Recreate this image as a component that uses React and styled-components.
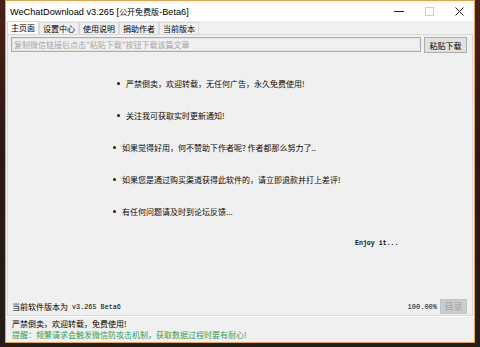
import React from "react";
import styled, { createGlobalStyle } from "styled-components";

const Global = createGlobalStyle`
  html, body { margin: 0; padding: 0; background: #1e1a18; }
  * { box-sizing: border-box; }
`;

const CJK = `"Noto Sans CJK SC", "Noto Sans", sans-serif`;
const MONO = `"Liberation Mono", "Noto Sans CJK SC", monospace`;

const Desktop = styled.div`
  width: 480px;
  height: 347px;
  padding: 0 5px 4px 5px;
  display: flex;
  background:
    linear-gradient(180deg, #4a1f18 0%, #2b1814 45%, #241c18 100%);
`;

const Window = styled.div`
  flex: 1;
  display: flex;
  flex-direction: column;
  border: 1px solid #eaa24a;
  background: #f0f0f0;
  overflow: hidden;
`;

const TitleBar = styled.div`
  height: 20px;
  flex: none;
  display: flex;
  align-items: center;
  background: #ffffff;
  padding-left: 4px;
`;

const Title = styled.div`
  flex: 1;
  font-family: "Liberation Sans", "Noto Sans CJK SC", sans-serif;
  font-size: 9.2px;
  color: #000;
  white-space: nowrap;
`;

const TitleCjk = styled.span`
  font-family: ${CJK};
  font-size: 8px;
`;

const Ctrl = styled.div`
  width: 30px;
  height: 20px;
  display: flex;
  align-items: center;
  justify-content: center;
`;

const TabStrip = styled.div`
  height: 13px;
  flex: none;
  display: flex;
  align-items: flex-end;
  padding-left: 1px;
`;

const Tab = styled.div`
  height: ${(p) => (p.$active ? "13px" : "12px")};
  padding: 0 3px;
  border: 1px solid #d9d9d9;
  border-bottom: none;
  background: ${(p) => (p.$active ? "#fbfbfb" : "#f0f0f0")};
  font-family: ${CJK};
  font-size: 8px;
  line-height: 11px;
  color: #000;
  white-space: nowrap;
`;

const Page = styled.div`
  flex: 1;
  margin: 0 1px;
  border: 1px solid #d9d9d9;
  display: flex;
  flex-direction: column;
  padding: 2px 5px 1px 3px;
`;

const InputRow = styled.div`
  display: flex;
  align-items: flex-start;
  gap: 3px;
  height: 16px;
`;

const UrlBox = styled.div`
  width: 410px;
  height: 15px;
  border: 1px solid #adadad;
  box-shadow: inset 0 0 0 1px #e3e3e3;
  background: #f0f0f0;
  font-family: ${CJK};
  font-size: 8px;
  line-height: 13px;
  padding-left: 2px;
  color: #a6a6a6;
  white-space: nowrap;
`;

const Button = styled.div`
  height: ${(p) => (p.$h ? p.$h : 16)}px;
  width: ${(p) => p.$w}px;
  border: 1px solid ${(p) => (p.$disabled ? "#c4c4c4" : "#adadad")};
  background: ${(p) => (p.$disabled ? "#cccccc" : "#e1e1e1")};
  color: ${(p) => (p.$disabled ? "#a3a3a3" : "#000")};
  font-family: ${CJK};
  font-size: ${(p) => (p.$disabled ? 9 : 8)}px;
  display: flex;
  align-items: center;
  justify-content: center;
  white-space: nowrap;
`;

const List = styled.div`
  margin-top: 14px;
  display: flex;
  flex-direction: column;
`;

const Item = styled.div`
  height: 32px;
  display: flex;
  align-items: center;
  padding-left: ${(p) => p.$indent}px;
  font-family: ${CJK};
  font-size: 8px;
  color: #0a0a0a;
  white-space: nowrap;
`;

const Dot = styled.span`
  width: 3px;
  height: 3px;
  border-radius: 50%;
  background: #2a2116;
  margin-right: 6px;
  flex: none;
`;

const Enjoy = styled.div`
  height: 32px;
  display: flex;
  align-items: center;
  padding-left: 344px;
  font-family: "Liberation Mono", monospace;
  font-size: 6.6px;
  font-weight: bold;
  color: #111;
`;

const StatusRow = styled.div`
  margin-top: auto;
  display: flex;
  align-items: center;
  height: 15px;
  padding-left: 1px;
  font-family: ${CJK};
  font-size: 8px;
  color: #000;
`;

const Mono = styled.span`
  font-family: ${MONO};
  font-size: 6.8px;
  margin-left: 4px;
`;

const Percent = styled.span`
  margin-left: auto;
  margin-right: 3px;
  font-family: ${MONO};
  font-size: 7px;
  color: #000;
`;

const Footer = styled.div`
  flex: none;
  height: 26px;
  border-top: 1px solid #ffffff;
  padding: 1px 6px 0 6px;
  font-family: ${CJK};
  font-size: 8px;
`;

const Line = styled.div`
  line-height: 11px;
  color: ${(p) => p.$color || "#000"};
  white-space: nowrap;
`;

export default function App() {
  return (
    <>
      <Global />
      <Desktop>
        <Window>
          <TitleBar>
            <Title>
              WeChatDownload v3.265 [<TitleCjk>公开免费版</TitleCjk>-Beta6]
            </Title>
            <Ctrl>
              <svg width="10" height="10" viewBox="0 0 10 10">
                <line x1="0" y1="5.5" x2="10" y2="5.5" stroke="#222" strokeWidth="1" />
              </svg>
            </Ctrl>
            <Ctrl>
              <svg width="9" height="9" viewBox="0 0 9 9">
                <rect x="0.5" y="0.5" width="8" height="8" fill="none" stroke="#cfcfcf" strokeWidth="1" />
              </svg>
            </Ctrl>
            <Ctrl>
              <svg width="9" height="9" viewBox="0 0 9 9">
                <path d="M0.5 0.5 L8.5 8.5 M8.5 0.5 L0.5 8.5" stroke="#222" strokeWidth="1" />
              </svg>
            </Ctrl>
          </TitleBar>
          <TabStrip>
            <Tab $active>主页面</Tab>
            <Tab>设置中心</Tab>
            <Tab>使用说明</Tab>
            <Tab>捐助作者</Tab>
            <Tab>当前版本</Tab>
          </TabStrip>
          <Page>
            <InputRow>
              <UrlBox>复制微信链接后点击"粘贴下载"按钮下载该篇文章</UrlBox>
              <Button $w={43}>粘贴下载</Button>
            </InputRow>
            <List>
              <Item $indent={106}>
                <Dot />严禁倒卖，欢迎转载，无任何广告，永久免费使用!
              </Item>
              <Item $indent={106}>
                <Dot />关注我可获取实时更新通知!
              </Item>
              <Item $indent={102}>
                <Dot />如果觉得好用，何不赞助下作者呢? 作者都那么努力了..
              </Item>
              <Item $indent={102}>
                <Dot />如果您是通过购买渠道获得此软件的，请立即退款并打上差评!
              </Item>
              <Item $indent={102}>
                <Dot />有任何问题请及时到论坛反馈...
              </Item>
              <Enjoy>Enjoy it...</Enjoy>
            </List>
            <StatusRow>
              当前软件版本为<Mono>v3.265 Beta6</Mono>
              <Percent>100.00%</Percent>
              <Button $w={27} $h={15} $disabled>目录</Button>
            </StatusRow>
          </Page>
          <Footer>
            <Line>严禁倒卖，欢迎转载，免费使用!</Line>
            <Line $color="#33a058">提醒：频繁请求会触发微信防攻击机制，获取数据过程时要有耐心!</Line>
          </Footer>
        </Window>
      </Desktop>
    </>
  );
}
